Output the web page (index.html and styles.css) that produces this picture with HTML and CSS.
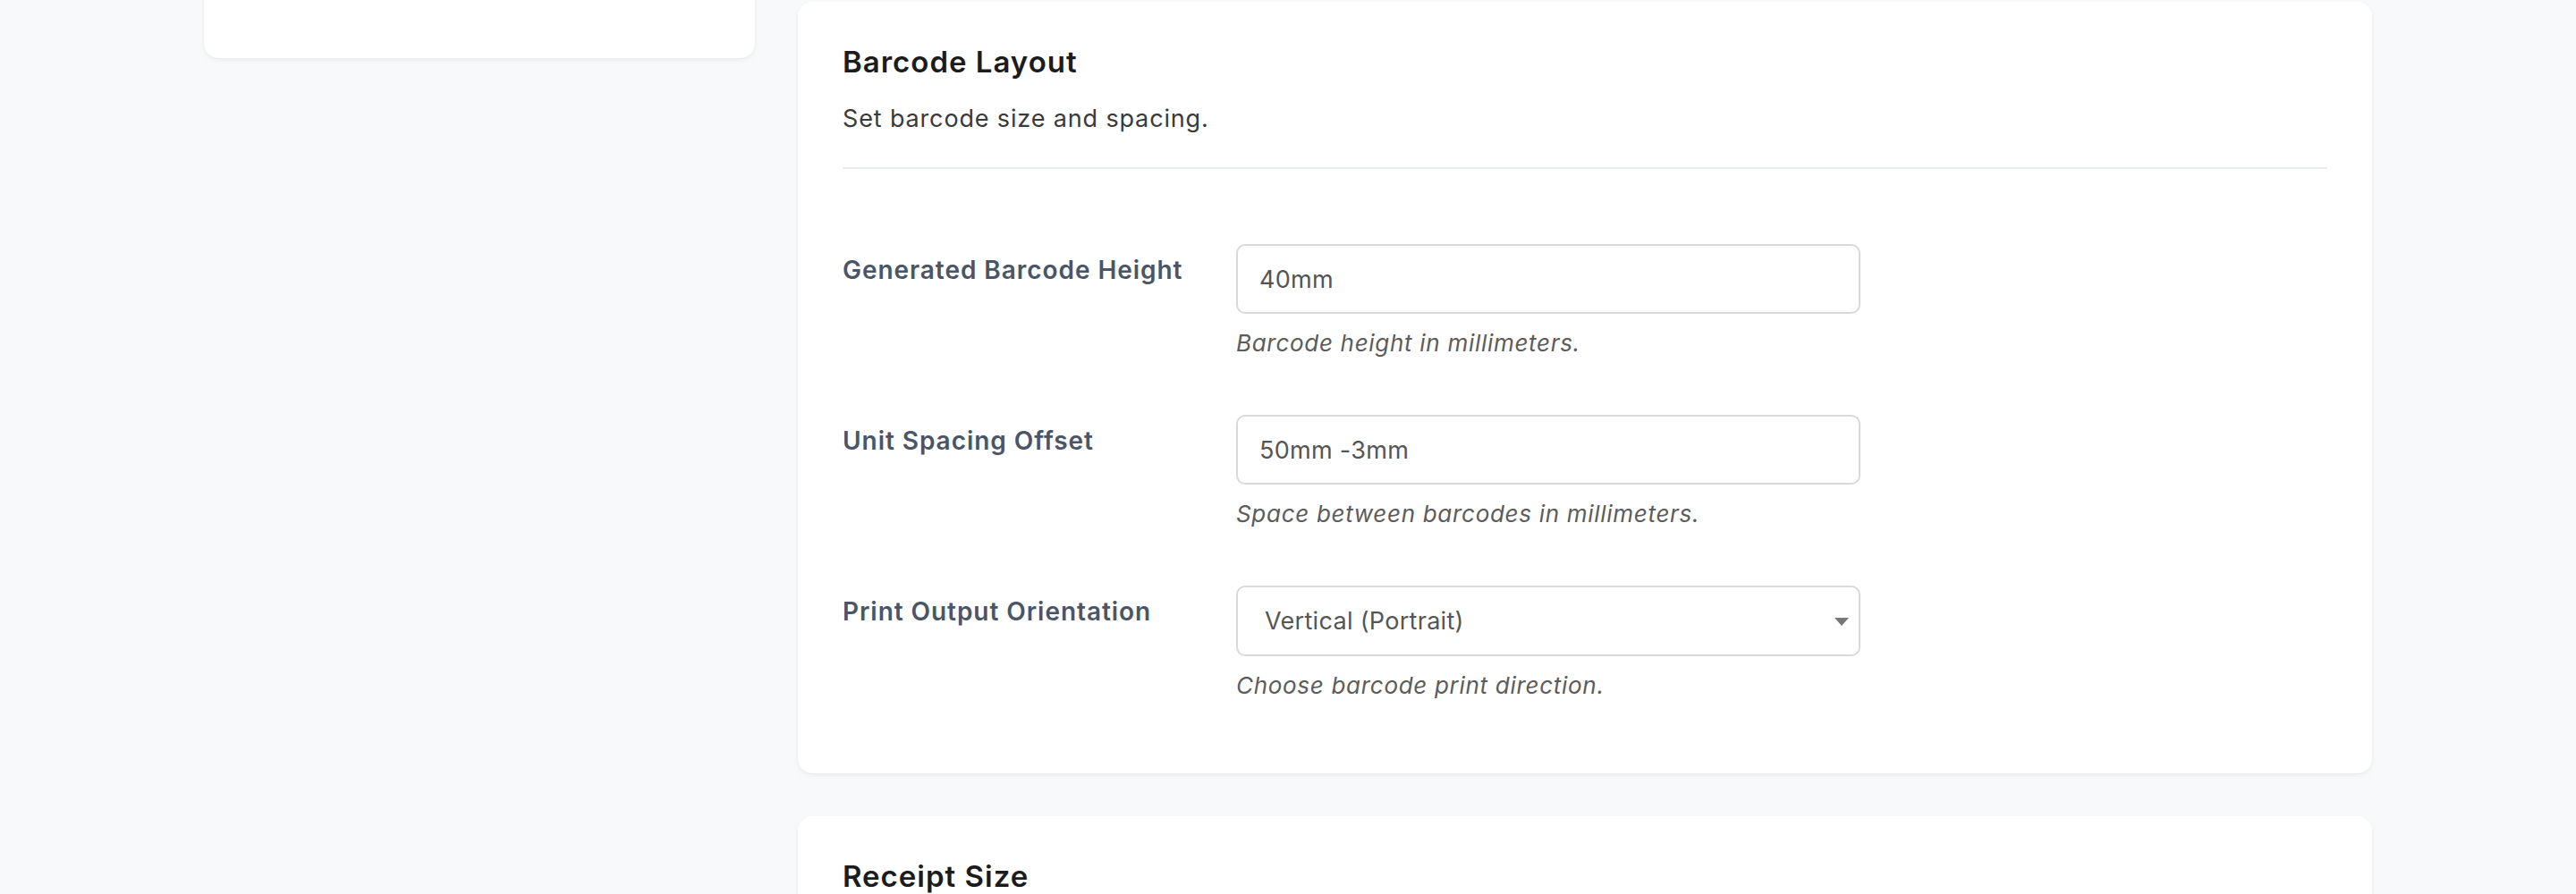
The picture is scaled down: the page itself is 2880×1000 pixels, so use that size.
FILE: index.html
```html
<!DOCTYPE html>
<html lang="en">
<head>
<meta charset="utf-8">
<title>Barcode Settings</title>
<link rel="stylesheet" href="styles.css">
</head>
<body>
<div class="layout">
  <aside class="sidebar">
    <div class="card sidebar-card"></div>
  </aside>
  <main class="content">
    <section class="card section">
      <header class="section-head">
        <h2 class="section-title">Barcode Layout</h2>
        <p class="section-desc">Set barcode size and spacing.</p>
      </header>
      <div class="fields">
        <div class="field-row">
          <label class="field-label" for="bh">Generated Barcode Height</label>
          <div class="field-control">
            <input class="text-input" id="bh" type="text" value="40mm">
            <p class="field-help">Barcode height in millimeters.</p>
          </div>
        </div>
        <div class="field-row">
          <label class="field-label" for="us">Unit Spacing Offset</label>
          <div class="field-control">
            <input class="text-input" id="us" type="text" value="50mm -3mm">
            <p class="field-help">Space between barcodes in millimeters.</p>
          </div>
        </div>
        <div class="field-row">
          <label class="field-label" for="po">Print Output Orientation</label>
          <div class="field-control">
            <div class="select-wrap">
              <select class="select-input" id="po">
                <option>Vertical (Portrait)</option>
                <option>Horizontal (Landscape)</option>
              </select>
              <span class="select-arrow"></span>
            </div>
            <p class="field-help">Choose barcode print direction.</p>
          </div>
        </div>
      </div>
    </section>
    <section class="card section">
      <header class="section-head">
        <h2 class="section-title">Receipt Size</h2>
        <p class="section-desc">Set receipt paper size.</p>
      </header>
    </section>
  </main>
</div>
</body>
</html>
```
FILE: styles.css
```css
* { box-sizing: border-box; }

html, body {
  margin: 0;
  padding: 0;
  background: #f8f9fa;
  font-family: Inter, "Noto Sans", "Liberation Sans", sans-serif;
  color: #212529;
}

.layout {
  width: 2424px;
  margin: 0 auto;
  padding-top: 2px;
  display: flex;
  align-items: flex-start;
  gap: 48px;
}

.sidebar {
  flex: 0 0 616px;
}

.content {
  flex: 1 1 auto;
  display: flex;
  flex-direction: column;
  gap: 48px;
}

.card {
  background: #ffffff;
  border-radius: 16px;
  box-shadow: 0 3px 7px rgba(0, 0, 0, 0.045), 0 1px 2px rgba(0, 0, 0, 0.03);
}

.sidebar-card {
  margin-top: -200px;
  height: 263px;
}

.section {
  padding: 48px 50px 79px;
}

.section-head {
  border-bottom: 2px solid #e9ecef;
  padding-bottom: 34px;
}

.section-title {
  margin: 0;
  font-size: 33px;
  line-height: 1.2;
  font-weight: 600;
  color: #1c1c1e;
  letter-spacing: 1px;
}

.section-desc {
  margin: 23px 0 0;
  font-size: 27px;
  line-height: 1.5;
  color: #3a3a3c;
  letter-spacing: 0.85px;
}

.fields {
  padding-top: 84px;
  display: flex;
  flex-direction: column;
  gap: 61px;
}

.field-row {
  display: flex;
  align-items: flex-start;
}

.field-label {
  flex: 0 0 440px;
  padding-top: 8px;
  font-size: 28px;
  line-height: 1.5;
  font-weight: 600;
  color: #4a5568;
  letter-spacing: 0.95px;
}

.field-control {
  flex: 0 0 698px;
}

.text-input,
.select-input {
  display: block;
  width: 100%;
  height: 78px;
  padding: 0 24px;
  border: 2px solid #d9d9d9;
  border-radius: 10px;
  background: #ffffff;
  font-family: inherit;
  font-size: 27px;
  color: #555555;
  letter-spacing: 0.3px;
  outline: none;
}

.select-wrap {
  position: relative;
}

.select-input {
  height: 79px;
  padding-left: 30px;
  -webkit-appearance: none;
  appearance: none;
}

.select-arrow {
  position: absolute;
  right: 13px;
  top: 36px;
  width: 0;
  height: 0;
  border-left: 8px solid transparent;
  border-right: 8px solid transparent;
  border-top: 9px solid #777777;
  pointer-events: none;
}

.field-help {
  margin: 13px 0 0;
  font-size: 26px;
  line-height: 1.5;
  font-style: italic;
  color: #5c5c5c;
  letter-spacing: 0.7px;
}
```
